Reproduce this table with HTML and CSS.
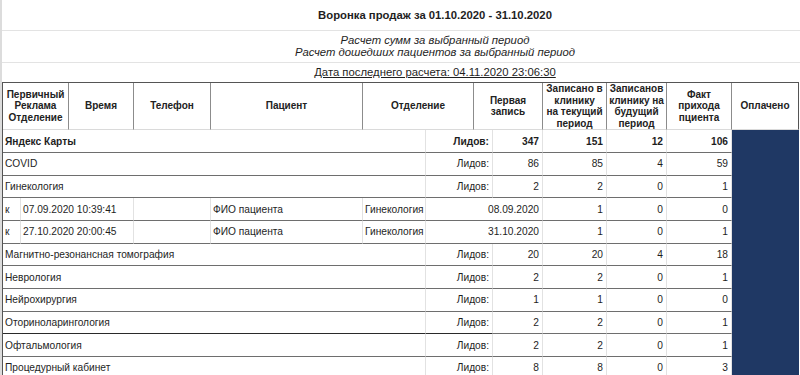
FILE: index.html
```html
<!DOCTYPE html>
<html lang="ru">
<head>
<meta charset="utf-8">
<title>Воронка продаж</title>
<link rel="stylesheet" href="styles.css">
</head>
<body>
<div class="sheet">
  <div class="top">
    <div class="title-row">Воронка продаж за 01.10.2020 - 31.10.2020</div>
    <div class="sub-row">Расчет сумм за выбранный период<br>Расчет дошедших пациентов за выбранный период</div>
    <div class="date-row"><span class="date-link">Дата последнего расчета: 04.11.2020 23:06:30</span></div>
  </div>
  <table class="grid">
    <colgroup>
      <col class="c18"><col class="c48"><col class="c65"><col class="c77"><col class="c152"><col class="c63"><col class="c48"><col class="c19"><col class="c50"><col class="c64"><col class="c60"><col class="c65"><col class="c67">
    </colgroup>
    <thead>
      <tr class="head">
        <th colspan="2">Первичный<br>Реклама<br>Отделение</th>
        <th>Время</th>
        <th>Телефон</th>
        <th>Пациент</th>
        <th colspan="2">Отделение</th>
        <th colspan="2">Первая<br>запись</th>
        <th>Записано в<br>клинику<br>на текущий<br>период</th>
        <th>Записанов<br>клинику на<br>будущий<br>период</th>
        <th>Факт<br>прихода<br>пциента</th>
        <th class="last">Оплачено</th>
      </tr>
    </thead>
    <tbody>
      <tr class="group bold">
        <td colspan="6" class="l">Яндекс Карты</td>
        <td colspan="2" class="r lbl">Лидов:</td>
        <td class="r">347</td><td class="r">151</td><td class="r">12</td><td class="r">106</td><td class="paid"></td>
      </tr>
      <tr class="group">
        <td colspan="6" class="l">COVID</td>
        <td colspan="2" class="r lbl">Лидов:</td>
        <td class="r">86</td><td class="r">85</td><td class="r">4</td><td class="r">59</td><td class="paid"></td>
      </tr>
      <tr class="group">
        <td colspan="6" class="l">Гинекология</td>
        <td colspan="2" class="r lbl">Лидов:</td>
        <td class="r">2</td><td class="r">2</td><td class="r">0</td><td class="r">1</td><td class="paid"></td>
      </tr>
      <tr class="patient">
        <td class="l">к</td>
        <td colspan="2" class="l">07.09.2020 10:39:41</td>
        <td></td>
        <td class="l">ФИО пациента</td>
        <td class="l">Гинекология</td>
        <td colspan="3" class="r">08.09.2020</td>
        <td class="r">1</td><td class="r">0</td><td class="r">0</td><td class="paid"></td>
      </tr>
      <tr class="patient">
        <td class="l">к</td>
        <td colspan="2" class="l">27.10.2020 20:00:45</td>
        <td></td>
        <td class="l">ФИО пациента</td>
        <td class="l">Гинекология</td>
        <td colspan="3" class="r">31.10.2020</td>
        <td class="r">1</td><td class="r">0</td><td class="r">1</td><td class="paid"></td>
      </tr>
      <tr class="group">
        <td colspan="6" class="l">Магнитно-резонансная томография</td>
        <td colspan="2" class="r lbl">Лидов:</td>
        <td class="r">20</td><td class="r">20</td><td class="r">4</td><td class="r">18</td><td class="paid"></td>
      </tr>
      <tr class="group">
        <td colspan="6" class="l">Неврология</td>
        <td colspan="2" class="r lbl">Лидов:</td>
        <td class="r">2</td><td class="r">2</td><td class="r">0</td><td class="r">1</td><td class="paid"></td>
      </tr>
      <tr class="group">
        <td colspan="6" class="l">Нейрохирургия</td>
        <td colspan="2" class="r lbl">Лидов:</td>
        <td class="r">1</td><td class="r">1</td><td class="r">0</td><td class="r">0</td><td class="paid"></td>
      </tr>
      <tr class="group dark">
        <td colspan="6" class="l">Оториноларингология</td>
        <td colspan="2" class="r lbl">Лидов:</td>
        <td class="r">2</td><td class="r">2</td><td class="r">0</td><td class="r">1</td><td class="paid"></td>
      </tr>
      <tr class="group">
        <td colspan="6" class="l">Офтальмология</td>
        <td colspan="2" class="r lbl">Лидов:</td>
        <td class="r">2</td><td class="r">2</td><td class="r">0</td><td class="r">1</td><td class="paid"></td>
      </tr>
      <tr class="group">
        <td colspan="6" class="l">Процедурный кабинет</td>
        <td colspan="2" class="r lbl">Лидов:</td>
        <td class="r">8</td><td class="r">8</td><td class="r">0</td><td class="r">3</td><td class="paid"></td>
      </tr>
    </tbody>
  </table>
</div>
</body>
</html>
```
FILE: styles.css
```css
html, body {
  margin: 0;
  padding: 0;
  background: #fff;
  overflow: hidden;
  width: 800px;
  height: 375px;
}
body {
  font-family: "Liberation Sans", Arial, sans-serif;
  color: #1e1e1e;
}
.sheet {
  border-left: 2px solid #dcdcdc;
  width: 798px;
}
.top {
  width: 798px;
  text-align: center;
}
.title-row,
.sub-row,
.date-row {
  padding-left: 68px;
  box-sizing: border-box;
  font-size: 11.3px;
}
.title-row {
  height: 31px;
  border-bottom: 1px solid #e3e3e3;
  font-weight: bold;
  line-height: 30px;
}
.sub-row {
  height: 32px;
  border-bottom: 1px solid #e3e3e3;
  font-style: italic;
  line-height: 12.3px;
  padding-top: 3px;
}
.date-row {
  height: 19px;
  line-height: 19px;
}
.date-link {
  text-decoration: underline;
}
.grid {
  border-collapse: separate;
  border-spacing: 0;
  table-layout: fixed;
  width: 797px;
  font-size: 10px;
  border-top: 1px solid #555;
  border-left: 1px solid #555;
}
.c18 { width: 18px; }
.c48 { width: 48px; }
.c65 { width: 65px; }
.c77 { width: 77px; }
.c152 { width: 152px; }
.c63 { width: 63px; }
.c19 { width: 19px; }
.c50 { width: 50px; }
.c64 { width: 64px; }
.c60 { width: 60px; }
.c67 { width: 67px; }
.grid th {
  font-weight: bold;
  font-size: 10px;
  line-height: 11.6px;
  height: 47px;
  padding: 0 1px;
  border-right: 1px solid #8c8c8c;
  border-bottom: 1px solid #dadada;
  text-align: center;
  vertical-align: middle;
  color: #222;
  box-sizing: border-box;
  overflow: hidden;
}
.grid th.last {
  border-right: 1px solid #555;
}
.grid td {
  height: 22.67px;
  padding: 0 3px;
  font-size: 10.2px;
  border-right: 1px solid #e2e2e2;
  border-bottom: 1px solid #6e6e6e;
  white-space: nowrap;
  overflow: visible;
  vertical-align: middle;
  box-sizing: border-box;
}
.grid td.l { text-align: left; padding-left: 2px; }
.grid td.r { text-align: right; }
.grid .bold td { font-weight: bold; }
.grid td.paid {
  background: #1f3864;
  border-right: 1px solid #1f3864;
  border-bottom: 1px solid #1f3864;
}
.grid tr.dark td.l,
.grid tr.dark td.lbl {
  border-bottom-color: #2a2a2a;
}
```
